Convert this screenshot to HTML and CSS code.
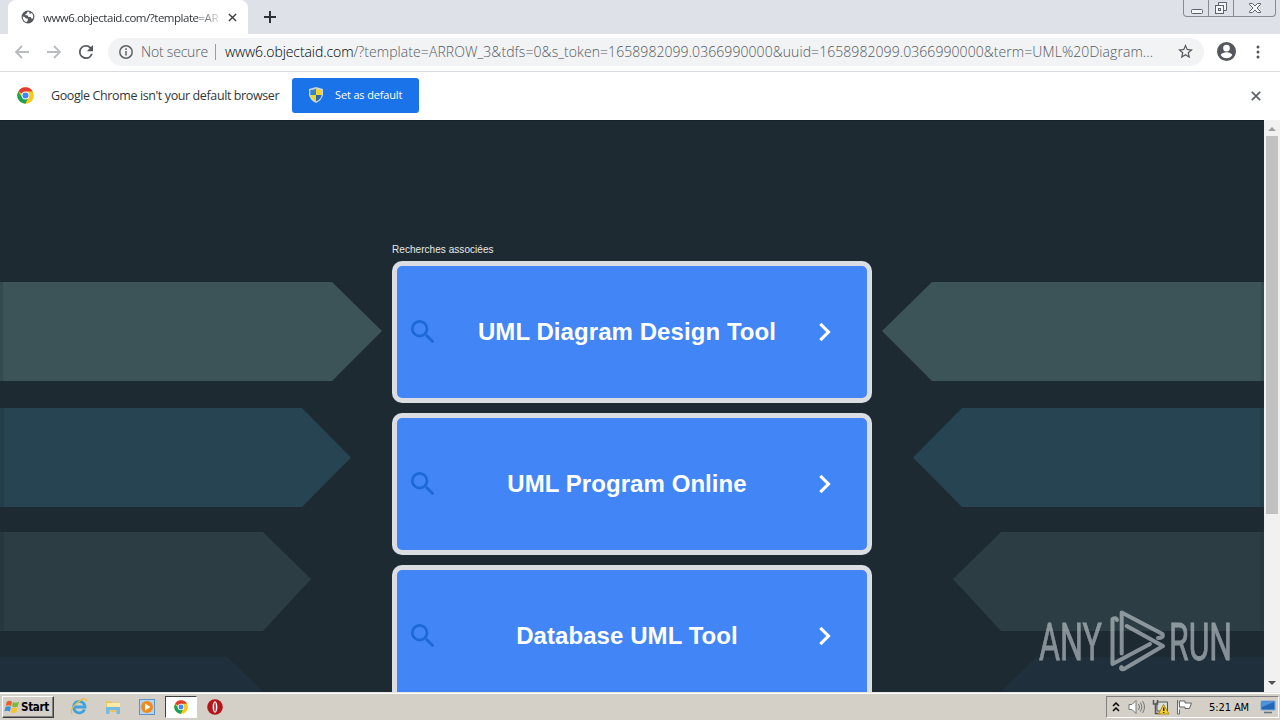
FILE: index.html
```html
<!DOCTYPE html>
<html lang="fr">

<head>
    <meta charset="UTF-8">
    <meta name="viewport" content="width=device-width, initial-scale=1.0">
    <title>www6.objectaid.com</title>
    <link rel="stylesheet" href="styles.css">
</head>

<body>

    <svg width="0" height="0" class="defs">
        <symbol id="chrome" viewBox="0 0 48 48">
            <circle cx="24" cy="24" r="23" fill="#fbc916" />
            <path d="M24 24 L4 12.5 A23 23 0 0 1 44 12.5 L44 14 H24z" fill="#e33b2e" />
            <path d="M4 12.5 A23 23 0 0 0 24 47 L33.5 29.5 L24 24 L14.5 29.5z" fill="#1da15a" />
            <path d="M24 13 H44 A23 23 0 0 1 24 47 L33.5 29.5z" fill="#fbc916" />
            <circle cx="24" cy="24" r="11" fill="#fff" />
            <circle cx="24" cy="24" r="8.5" fill="#4285f4" />
        </symbol>
        <symbol id="search" viewBox="0 0 24 24">
            <path d="M15.5 14h-.79l-.28-.27A6.47 6.47 0 0 0 16 9.5 6.5 6.5 0 1 0 9.5 16c1.61 0 3.09-.59 4.23-1.57l.27.28v.79l5 4.99L20.49 19zm-6 0A4.5 4.5 0 1 1 14 9.5 4.49 4.49 0 0 1 9.5 14z" />
        </symbol>
        <symbol id="chevron" viewBox="0 0 24 24">
            <path d="M10 6 8.59 7.41 13.17 12l-4.58 4.59L10 18l6-6z" />
        </symbol>
    </svg>

    <div class="tab-strip">
        <div class="tab">
            <svg class="globe" viewBox="0 0 24 24">
                <circle cx="12" cy="12" r="11" fill="#54585d" />
                <path d="M3 11 Q7 11 8 14 L12 15 Q12 19 9 21 Q3 18 3 11z M11 3 Q11 6 8 7 L7 9 H11 L13 12 H17 L18 15 L20 15 Q23 9 18 5 L15 7 L14 3z" fill="#fff" />
            </svg>
            <span class="tab-title">www6.objectaid.com/?template=AR</span>
            <svg class="tab-close" viewBox="0 0 10 10"><path d="M1 1 9 9M9 1 1 9" /></svg>
        </div>
        <svg class="new-tab" viewBox="0 0 12 12"><path d="M6 0V12M0 6H12" /></svg>
        <div class="window-buttons">
            <span class="win-btn"><svg width="13" height="14"><rect x="1.5" y="8.5" width="11" height="4" rx="1" /></svg></span>
            <span class="win-btn"><svg width="14" height="14"><path d="M4.5 4V1.5h8v8H10" /><rect x="1.5" y="4.5" width="8" height="8" /><rect x="4.5" y="7.5" width="2" height="2" /></svg></span>
            <span class="win-btn wide"><svg width="12" height="12"><path d="M.5 1.5h3L6 4l2.5-2.5h3v1L8 6l3.5 3.5v1h-3L6 8l-2.5 2.5h-3v-1L4 6 .5 2.5z" /></svg></span>
        </div>
    </div>

    <div class="toolbar">
        <svg class="nav-icon" viewBox="0 0 16 16"><path d="M15 8H2M8 2 2 8l6 6" /></svg>
        <svg class="nav-icon" viewBox="0 0 16 16"><path d="M1 8H14M8 2l6 6-6 6" /></svg>
        <svg class="reload" viewBox="4 4 16 16"><path d="M17.65 6.35A7.95 7.95 0 0 0 12 4a8 8 0 1 0 7.73 10h-2.08A6 6 0 1 1 12 6c1.66 0 3.14.69 4.22 1.78L13 11h7V4z" /></svg>
        <div class="omnibox">
            <svg class="info" viewBox="0 0 14 14"><circle cx="7" cy="7" r="6.2" /><path d="M7 6v4.5M7 3.3v1.6" /></svg>
            <span class="secure">Not secure</span>
            <span class="divider"></span>
            <span class="url"><b>www6.objectaid.com</b>/?template=ARROW_3&amp;tdfs=0&amp;s_token=1658982099.0366990000&amp;uuid=1658982099.0366990000&amp;term=UML%20Diagram...</span>
            <svg class="star" viewBox="2 2 20 20"><path d="m22 9.24-7.19-.62L12 2 9.19 8.63 2 9.24l5.46 4.73L5.82 21 12 17.27 18.18 21l-1.63-7.03zM12 15.4l-3.76 2.27 1-4.28-3.32-2.88 4.38-.38L12 6.1l1.71 4.04 4.38.38-3.32 2.88 1 4.28z" /></svg>
        </div>
        <svg class="profile" viewBox="2 2 20 20"><path d="M12 2a10 10 0 1 0 0 20 10 10 0 0 0 0-20zm0 3a3.5 3.5 0 1 1 0 7 3.5 3.5 0 0 1 0-7zm0 14.2a7.2 7.2 0 0 1-6-3.22c.03-1.99 4-3.08 6-3.08s5.97 1.09 6 3.08a7.2 7.2 0 0 1-6 3.22z" /></svg>
        <svg class="menu" viewBox="0 0 4 14"><circle cx="2" cy="2" r="1.5" /><circle cx="2" cy="7" r="1.5" /><circle cx="2" cy="12" r="1.5" /></svg>
    </div>

    <div class="infobar">
        <svg class="info-logo"><use href="#chrome" /></svg>
        <span class="info-text">Google Chrome isn't your default browser</span>
        <button class="default-btn">
            <svg class="shield" viewBox="0 0 14 16">
                <path d="M7 0 14 2V8Q13 13 7 16 1 13 0 8V2z" fill="#c9d6dc" />
                <path d="M7 1.5V8H1.3V3Q5 3 7 1.5z" fill="#3a83c9" />
                <path d="M7 1.5V8h5.7V3Q9 3 7 1.5z" fill="#f6d529" />
                <path d="M7 8v6.5Q2 12 1.3 8z" fill="#f6d529" />
                <path d="M7 8v6.5Q12 12 12.7 8z" fill="#2c69b8" />
            </svg>
            <span>Set as default</span>
        </button>
        <svg class="info-close" viewBox="0 0 10 10"><path d="M.8.8 9.2 9.2M9.2.8.8 9.2" /></svg>
    </div>

    <div class="viewport">
        <main class="page">
            <svg class="arrows" viewBox="0 0 1264 572">
                <g id="arrows-left">
                    <path d="M0 162H332L382 211 332 261H0z" fill="#3c5457" />
                    <path d="M0 288H302L351 337.5 302 387H0z" fill="#264451" />
                    <path d="M0 412H263L311 459 263 511H0z" fill="#2c3d43" />
                    <path d="M0 537H227L264 572H0z" fill="#1f303c" />
                    <path d="M0 162H3V261H0z M0 288H4V387H0z M0 412H4V511H0z" fill="#1e2a32" opacity=".25" />
                </g>
                <use href="#arrows-left" transform="translate(1264) scale(-1 1)" />
            </svg>
            <p class="related">Recherches associées</p>
            <div class="link-list">
                <a class="link-item">
                    <svg class="search"><use href="#search" /></svg>
                    <span>UML Diagram Design Tool</span>
                    <svg class="chevron"><use href="#chevron" /></svg>
                </a>
                <a class="link-item">
                    <svg class="search"><use href="#search" /></svg>
                    <span>UML Program Online</span>
                    <svg class="chevron"><use href="#chevron" /></svg>
                </a>
                <a class="link-item">
                    <svg class="search"><use href="#search" /></svg>
                    <span>Database UML Tool</span>
                    <svg class="chevron"><use href="#chevron" /></svg>
                </a>
            </div>
            <svg class="watermark" viewBox="0 0 200 66">
                <text x="4" y="52" textLength="63" lengthAdjust="spacingAndGlyphs">ANY</text>
                <path d="M82 12Q81 9 77.5 11V56L115 36M86.7 45.5V4.5L127.5 26Q129 30 123 30M91.7 18L128 38 89 61Q85 62 86.5 59" />
                <text x="134" y="52" textLength="63" lengthAdjust="spacingAndGlyphs">RUN</text>
            </svg>
        </main>
        <div class="scrollbar">
            <span class="scroll-up"></span>
            <span class="scroll-thumb"></span>
            <span class="scroll-down"></span>
        </div>
    </div>

    <div class="taskbar">
        <button class="start">
            <svg viewBox="0 0 18 16">
                <path d="M3 2Q6 0 9 2L8 7Q5 5 2 7z" fill="#e8602c" />
                <path d="M10 2.5Q13 4 17 2L15.5 7.5Q12 9 9 7.5z" fill="#7db93c" />
                <path d="M1.7 8Q5 6.5 7.8 8L6.5 13Q3 11.5.5 13z" fill="#3e8ede" />
                <path d="M8.8 8.5Q12 10 15.2 8.5L14 14Q10 15.5 7.5 13.5z" fill="#f6c42c" />
            </svg>
            <span>Start</span>
        </button>
        <div class="quick-launch">
            <span class="app"><svg viewBox="0 0 18 18">
                <path d="M14.5 11.5A5.7 5.7 0 1 1 15 9H5" fill="none" stroke="#3fa2e0" stroke-width="2.8" />
                <path d="M2 16Q-1 12 7 5T17 3" fill="none" stroke="#e5bd45" stroke-width="1.3" />
            </svg></span>
            <span class="app"><svg viewBox="0 0 18 18">
                <path d="M2 3H7L8 4.5H15V14H2z" fill="#e7c566" />
                <path d="M3 5H16V10H3z" fill="#f9eaa6" />
                <path d="M2 16V9H16V16H12.5V12H5.5V16z" fill="#79bce3" />
            </svg></span>
            <span class="app"><svg viewBox="0 0 18 18">
                <rect x="1.5" y="1.5" width="15" height="15" fill="#b5d3ee" stroke="#5b94cc" />
                <circle cx="9" cy="9" r="6" fill="#f08a1c" />
                <path d="M7 5.5 12.5 9 7 12.5z" fill="#fff" />
            </svg></span>
            <span class="app active"><svg class="small"><use href="#chrome" /></svg></span>
            <span class="app"><svg viewBox="0 0 18 18">
                <circle cx="9" cy="9" r="7.8" fill="#b3151b" />
                <ellipse cx="9" cy="9" rx="2.4" ry="5.8" fill="#fff" />
                <ellipse cx="9" cy="9" rx="0.8" ry="4.8" fill="#b3151b" />
            </svg></span>
        </div>
        <div class="tray">
            <svg width="8" height="12" class="up"><path d="M1 5 4 2l3 3M1 10l3-3 3 3" /></svg>
            <svg width="18" height="16" class="volume"><path d="M1 5.5H4L8 1.5V14.5L4 10.5H1z" fill="#fff" /><path d="M10.5 5Q12.5 8 10.5 11M12.5 3.5Q15.5 8 12.5 12.5M14.5 2Q18.5 8 14.5 14" fill="none" /></svg>
            <svg width="18" height="16"><path d="M5 3H15.5V12H5z" fill="#d8e0da" stroke="#555" /><path d="M1.5 1V5H5.5V1M3.5 5V14.5H8" fill="none" stroke="#555" stroke-width="1.5" /><path d="M11.5 5.5 17 15H6.5z" fill="#f6d22e" stroke="#b28a10" /><path d="M11.7 8.5V12M11.7 13V14" stroke="#222" stroke-width="1.4" /></svg>
            <svg width="17" height="16" class="flag"><path d="M1.5 1V15H3.5V10.5M3.5 2H9V4H15.5L13.5 9.5H9V8H3.5z" /></svg>
            <span class="clock">5:21 AM</span>
            <svg width="17" height="14" class="desktop"><path d="M2 1H16V10H2z" fill="#2467b6" stroke="#7fa9d8" /><path d="M3 2H15L3 7z" fill="#4e94dc" /><path d="M5 12.5H13" stroke="#62717e" stroke-width="1.5" /></svg>
        </div>
    </div>

</body>

</html>
```
FILE: styles.css
```css
* {
    box-sizing: border-box;
}

body {
    margin: 0;
    width: 1280px;
    height: 720px;
    overflow: hidden;
    display: flex;
    flex-direction: column;
    font-family: "Open Sans", "Noto Sans", sans-serif;
    background-color: #fff;
}

svg {
    display: block;
    flex-shrink: 0;
}

.defs {
    position: absolute;
}

/* Tabs */
.tab-strip {
    height: 34px;
    flex-shrink: 0;
    display: flex;
    background-color: #dee1e8;
}

.tab {
    width: 240px;
    height: 34px;
    margin-left: 8px;
    padding: 0 11px 0 13px;
    display: flex;
    align-items: center;
    background-color: #fff;
    border-radius: 8px 8px 0 0;
}

.globe {
    width: 14px;
    height: 14px;
}

.tab-title {
    width: 177px;
    margin-left: 8px;
    white-space: nowrap;
    font-size: 11.5px;
    letter-spacing: -0.48px;
    color: #333639;
    -webkit-mask-image: linear-gradient(to right, #000 155px, transparent 180px);
}

.tab-close {
    width: 9px;
    height: 9px;
    margin-left: 8px;
    stroke: #3c4043;
    stroke-width: 1.6;
}

.new-tab {
    width: 12px;
    height: 12px;
    margin: 11px 0 0 16px;
    stroke: #2d3034;
    stroke-width: 2;
}

.window-buttons {
    display: flex;
    height: 17px;
    margin-left: auto;
    margin-right: 4px;
    border: 1px solid #858a93;
    border-top: none;
    border-radius: 0 0 4px 4px;
}

.win-btn {
    width: 25px;
    display: flex;
    align-items: center;
    justify-content: center;
    border-right: 1px solid #858a93;
}

.win-btn.wide {
    width: 41px;
    border-right: none;
}

.win-btn svg {
    fill: #f5f6f8;
    stroke: #5d626b;
}

/* Toolbar */
.toolbar {
    height: 38px;
    flex-shrink: 0;
    padding: 0 20px 2px 14px;
    display: flex;
    align-items: center;
    border-bottom: 1px solid #dadce0;
}

.nav-icon {
    width: 16px;
    height: 16px;
    margin-right: 16px;
    fill: none;
    stroke: #b9bbbe;
    stroke-width: 1.8;
}

.reload {
    width: 14px;
    height: 14px;
    margin-left: 1px;
    fill: #54585d;
}

.omnibox {
    width: 1096px;
    height: 28px;
    margin-left: 15px;
    padding: 0 11px;
    display: flex;
    align-items: center;
    background-color: #f1f3f5;
    border-radius: 14px;
    color: #55595e;
    font-size: 14px;
    font-weight: 300;
    white-space: nowrap;
}

.info {
    width: 14px;
    height: 14px;
    fill: none;
    stroke: #5f6368;
    stroke-width: 1.5;
}

.secure {
    width: 67px;
    margin-left: 8px;
    letter-spacing: -0.2px;
}

.divider {
    width: 1px;
    height: 16px;
    margin: 0 9px 0 7px;
    background-color: #9a9ea3;
}

.url {
    width: 930px;
    letter-spacing: 0.07px;
}

.url b {
    font-weight: 300;
    letter-spacing: -0.08px;
    color: #000;
}

.star {
    width: 15px;
    height: 15px;
    margin-left: auto;
    fill: #54585d;
}

.profile {
    width: 19px;
    height: 19px;
    margin-left: 13px;
    fill: #54585d;
}

.menu {
    width: 4px;
    height: 14px;
    margin-left: auto;
    fill: #54585d;
}

/* Default browser bar */
.infobar {
    height: 48px;
    flex-shrink: 0;
    padding: 0 19px 1px 17px;
    display: flex;
    align-items: center;
    font-size: 12.5px;
    color: #333639;
}

.info-logo {
    width: 17px;
    height: 17px;
}

.info-text {
    width: 241px;
    margin-left: 17px;
    white-space: nowrap;
    letter-spacing: -0.39px;
}

.default-btn {
    width: 127px;
    height: 35px;
    padding: 0 0 2px 17px;
    display: flex;
    align-items: center;
    gap: 12px;
    border: none;
    border-radius: 3px;
    background-color: #1a73e8;
    color: #fff;
    font-family: inherit;
    font-size: 11px;
    letter-spacing: -0.15px;
    white-space: nowrap;
}

.shield {
    width: 14px;
    height: 16px;
}

.info-close {
    width: 10px;
    height: 10px;
    margin-left: auto;
    stroke: #5f6368;
    stroke-width: 1.8;
}

/* Page */
.viewport {
    height: 572px;
    flex-shrink: 0;
    display: flex;
    overflow: hidden;
}

.page {
    position: relative;
    width: 1264px;
    height: 572px;
    overflow: hidden;
    background-color: #1e2a32;
    border-top: 1px solid #17212a;
    font-family: "Liberation Sans", Arial, sans-serif;
}

.arrows {
    position: absolute;
    top: -1px;
    left: 0;
    width: 1264px;
    height: 572px;
}

.related {
    position: relative;
    margin: 123px 0 0 392px;
    font-size: 10px;
    line-height: 12px;
    letter-spacing: 0.05px;
    color: #e4eaec;
}

.link-list {
    position: relative;
    width: 480px;
    margin: 5px auto 0;
    display: flex;
    flex-direction: column;
    gap: 10px;
}

.link-item {
    height: 142px;
    padding: 0 24px 0 10px;
    display: flex;
    align-items: center;
    border: 5px solid #dadde1;
    border-radius: 10px;
    background-color: #4285f6;
    color: #fff;
    font-size: 24px;
    font-weight: bold;
    letter-spacing: 0.07px;
}

.link-item span {
    flex: 1;
    padding-left: 9px;
    text-align: center;
}

.search {
    width: 32px;
    height: 32px;
    fill: #1c68d8;
}

.chevron {
    width: 37px;
    height: 40px;
    fill: #fff;
}

.watermark {
    position: absolute;
    left: 1035px;
    top: 487px;
    width: 200px;
    height: 66px;
    overflow: visible;
    opacity: 0.55;
}

.watermark text {
    font-family: Roboto, sans-serif;
    font-size: 52px;
    fill: #dce3e6;
    stroke: #dce3e6;
    stroke-width: 0.8;
}

.watermark path {
    fill: none;
    stroke: #dce3e6;
    stroke-width: 4;
    stroke-linejoin: round;
    stroke-linecap: round;
}

.scrollbar {
    width: 16px;
    display: flex;
    flex-direction: column;
    align-items: center;
    background-color: #f1f1f1;
}

.scroll-up,
.scroll-down {
    border: 4px solid transparent;
}

.scroll-up {
    margin-top: 3px;
    border-bottom-color: #a0a0a0;
}

.scroll-thumb {
    width: 12px;
    height: 378px;
    margin-top: 5px;
    background-color: #c1c1c1;
}

.scroll-down {
    margin: auto 0 3px;
    border-top-color: #505050;
}

/* Taskbar */
.taskbar {
    height: 28px;
    flex-shrink: 0;
    padding: 1px 1px 0 2px;
    display: flex;
    align-items: center;
    background-color: #d4d0c8;
    border-top: 1px solid #e9e6e0;
    box-shadow: inset 0 1px #fff;
}

.start {
    width: 52px;
    height: 22px;
    padding: 0 0 0 1px;
    display: flex;
    align-items: center;
    gap: 1px;
    border: 1px solid;
    border-color: #fff #404040 #404040 #fff;
    box-shadow: inset -1px -1px #808080;
    background-color: #d4d0c8;
    color: #000;
    font-family: "DejaVu Sans Condensed", "DejaVu Sans", sans-serif;
    font-size: 11.5px;
    font-weight: bold;
    letter-spacing: -0.3px;
}

.start svg {
    width: 16px;
    height: 16px;
}

.quick-launch {
    display: flex;
    margin-left: 9px;
    gap: 2px;
}

.app {
    width: 32px;
    height: 22px;
    display: flex;
    align-items: center;
    justify-content: center;
}

.app svg {
    width: 18px;
    height: 18px;
}

.app svg.small {
    width: 14px;
    height: 14px;
}

.app.active {
    border: 1px solid;
    border-color: #404040 #fff #fff #404040;
    background-color: #fff;
}

.tray {
    width: 173px;
    height: 22px;
    margin-left: auto;
    padding: 0 2px 0 5px;
    display: flex;
    align-items: center;
    border: 1px solid;
    border-color: #808080 #fff #fff #808080;
}

.tray svg {
    margin-right: 6px;
}

.tray .up {
    margin-right: 8px;
    fill: none;
    stroke: #000;
    stroke-width: 1.5;
}

.tray .volume {
    stroke: #777;
}

.tray .flag {
    margin-right: 0;
    fill: #fff;
    stroke: #666;
}

.clock {
    margin-left: auto;
    font-family: "DejaVu Sans Condensed", "DejaVu Sans", sans-serif;
    font-size: 11px;
    white-space: nowrap;
    letter-spacing: -0.1px;
}

.tray .desktop {
    margin: 0 0 0 10px;
}
```
